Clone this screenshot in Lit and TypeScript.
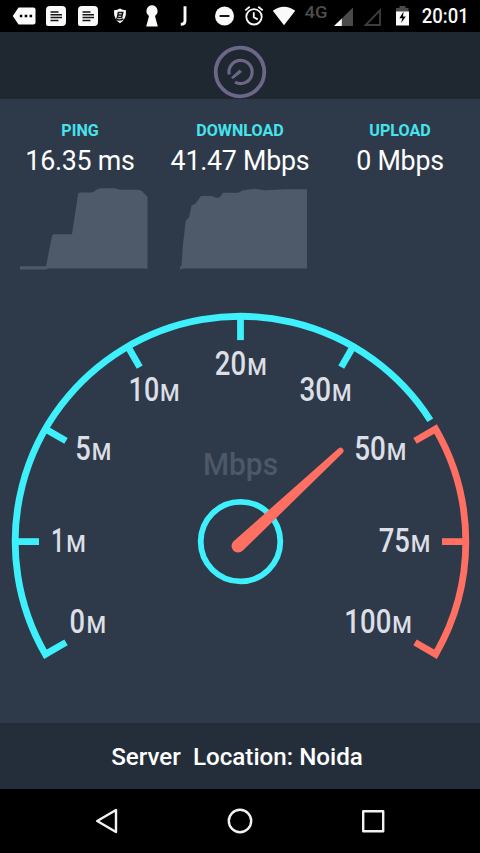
import { LitElement, html, svg, css } from "lit";
import { customElement } from "lit/decorators.js";

const CX = 240.5;
const CY = 541.6;
const R = 225.3;

function polar(deg: number, r: number): [number, number] {
  const a = (deg * Math.PI) / 180;
  return [CX + r * Math.cos(a), CY - r * Math.sin(a)];
}

function arc(from: number, to: number): string {
  const [x1, y1] = polar(from, R);
  const [x2, y2] = polar(to, R);
  const large = Math.abs(from - to) > 180 ? 1 : 0;
  return `M${x1} ${y1}A${R} ${R} 0 ${large} 1 ${x2} ${y2}`;
}

// value, left edge of the digits, digits' advance, left edge of the M, baseline
const marks: [string, number, number, number, number][] = [
  ["0", 69.5, 15.5, 86.6, 632.5],
  ["1", 51, 13.5, 66.2, 551.7],
  ["5", 75.2, 15.5, 91.7, 460.3],
  ["10", 128.6, 30.6, 160.1, 400.7],
  ["20", 214.8, 31.3, 247.2, 374.5],
  ["30", 299.4, 31.6, 332.1, 400.7],
  ["50", 354.2, 31.7, 386.7, 460.3],
  ["75", 378.7, 31.2, 410.8, 551.7],
  ["100", 344.3, 47, 392.2, 632.5],
];

const ticks: [number, boolean][] = [
  [180, false], [150, false], [120, false], [90, false], [60, false], [0, true],
];

@customElement("speed-gauge")
export class SpeedGauge extends LitElement {
  static styles = css`
    :host { display: block; }
    svg { display: block; }
    .line { fill: none; stroke: #3ef0fb; stroke-width: 6.8; stroke-linejoin: miter; }
    .hot { stroke: #ff6f62; }
    .hub { stroke-width: 5.8; }
    .needle { fill: #ff6f62; }
    text { font-family: Roboto, "Liberation Sans", sans-serif; font-weight: 500; fill: #dcdfe6; }
    .num { font-size: 32.3px; }
    .m { font-size: 23.5px; }
    .unit { font-size: 31px; fill: #4c5868; }
  `;

  private tick(deg: number, hot: boolean) {
    const [x1, y1] = polar(deg, R);
    const [x2, y2] = polar(deg, 201.5);
    return svg`<line class="line ${hot ? "hot" : ""}" x1=${x1} y1=${y1} x2=${x2} y2=${y2}></line>`;
  }

  render() {
    const zero = polar(210, 201.5);
    const fifty = polar(30, 201.5);
    const max = polar(-30, 201.5);
    return html`<svg width="480" height="440" viewBox="0 283 480 440">
      <text class="unit" x="203" y="475.3" textLength="75" lengthAdjust="spacingAndGlyphs">Mbps</text>
      <path class="line" d="M${zero[0]} ${zero[1]}L${arc(210, 32.6).slice(1)}"></path>
      <path class="line hot" d="M${fifty[0]} ${fifty[1]}L${arc(30, -30).slice(1)}L${max[0]} ${max[1]}"></path>
      ${ticks.map(([d, h]) => this.tick(d, h))}
      <circle class="line hub" cx=${CX} cy=${CY} r="39.8"></circle>
      <path class="needle" d="M233.6 541.2L338.4 448.6A3 3 0 0 1 342.6 453L242.6 550.8A6.5 6.5 0 0 1 233.6 541.2Z"></path>
      ${marks.map(([n, x, w, mx, y]) => svg`<text y=${y}><tspan class="num" x=${x} textLength=${w} lengthAdjust="spacingAndGlyphs">${n}</tspan><tspan class="m" x=${mx} textLength="19.6" lengthAdjust="spacingAndGlyphs">M</tspan></text>`)}
    </svg>`;
  }
}

@customElement("status-bar")
export class StatusBar extends LitElement {
  static styles = css`
    :host { display: block; height: 32px; background: #000; }
    svg { display: block; }
    text { font-family: Roboto, "Liberation Sans", sans-serif; }
    .w { fill: #fafafa; }
    .ws { fill: none; stroke: #fafafa; stroke-width: 1.8; }
    .k { fill: none; stroke: #151515; stroke-width: 1.5; }
    .j { stroke-width: 2.9; }
    .bar { stroke-width: 2; }
    .dim { fill: #4a4a4a; }
    .net { font-size: 17px; fill: #4d4d4d; font-weight: 500; }
    .clock { font-size: 19.6px; fill: #fafafa; font-weight: 500; }
  `;
  render() {
    return html`<svg width="480" height="32" viewBox="0 0 480 32">
      <path class="w" d="M18.5 7.5H33.5Q35.5 7.5 35.5 9.5V22.5Q35.5 24.5 33.5 24.5H18.5L12.8 16Z"></path>
      <path d="M19.8 14.8h2.5v2.5h-2.5zM24.7 14.8h2.5v2.5h-2.5zM29.6 14.8h2.5v2.5h-2.5z"></path>
      ${[46, 78].map((x) => svg`<g transform="translate(${x} 0)">
        <path class="w" d="M4 6H16Q20 6 20 10V22Q20 26 16 26H2Q0 26 0 24V10Q0 6 4 6Z"></path>
        <path class="k" d="M4.5 12H12.5M4.5 14.8H16M4.5 17.6H16M4.5 20.4H12.5"></path></g>`)}
      <path class="w" d="M120 8.6Q123 10.4 126 10.2Q126.5 19.5 120 23.2Q113.5 19.5 114 10.2Q117 10.4 120 8.6Z"></path>
      <path class="k" d="M118.4 12.4H122.8L121.6 17.6H117.4Z M118 15H122.2M115.8 18.6Q119 21.3 123.5 18.8"></path>
      <path class="w" d="M152 5.3A5.8 5.8 0 0 1 155 15.9L157.8 26.5H146.2L149 15.9A5.8 5.8 0 0 1 152 5.3Z"></path>
      <path class="ws j" d="M185 6.3V20.5Q185 24.3 180.8 24.3"></path>
      <circle class="w" cx="224.5" cy="16" r="9.5"></circle>
      <path class="k bar" d="M219.6 16H229.4"></path>
      <circle class="ws" cx="254" cy="16.8" r="7.7"></circle>
      <path class="ws" d="M253.8 12.3V17.3L257.8 19.4M245.3 10.4L249.7 6.8M262.7 10.4L258.3 6.8"></path>
      <path class="w" d="M272.8 10.8Q284 2.5 295.2 10.8L284 25.2Z"></path>
      <text class="net" x="304.6" y="17.6" textLength="23" lengthAdjust="spacingAndGlyphs">4G</text>
      <path class="dim" d="M353 7.5V26H334Z"></path>
      <path class="w" d="M341.8 18.5V26H334Z"></path>
      <path d="M380 10.3V25H365.5Z" fill="none" stroke="#3e3e3e" stroke-width="1.8"></path>
      <path class="dim" d="M399.5 6H405.5V8H408.5V12H396V8H399.5Z"></path>
      <path class="w" d="M396 11.5H409V25.5H396Z"></path>
      <path d="M403.6 11.5L399.4 18.2H402.2L401.2 23L405.8 16.4H403Z"></path>
      <text class="clock" x="421.8" y="23.3" textLength="47" lengthAdjust="spacingAndGlyphs">20:01</text>
    </svg>`;
  }
}

@customElement("app-root")
export class AppRoot extends LitElement {
  static styles = css`
    :host {
      display: flex; flex-direction: column; width: 480px; height: 853px; overflow: hidden;
      background: #2e3a49; color: #fff; font-family: Roboto, "Liberation Sans", sans-serif;
    }
    svg { display: block; }
    .head { height: 66.5px; background: #1f2730; display: flex; justify-content: center; box-sizing: border-box; padding-top: 13px; flex: none; }
    .logo { fill: none; stroke: #6c6788; }
    .stats { display: grid; grid-template-columns: repeat(3, 160px); height: 184.5px; flex: none; }
    .stat { display: flex; flex-direction: column; align-items: center; padding-top: 22px; }
    .name { font-size: 16.1px; line-height: 20px; font-weight: 700; color: #45e4ee; white-space: nowrap; }
    .value { font-size: 26.8px; letter-spacing: -0.24px; line-height: 32px; margin-top: 4px; white-space: nowrap; }
    .chart { margin-top: 6px; fill: #4e5a69; }
    .server {
      height: 66px; flex: none; background: #242e3a; display: flex; align-items: center; justify-content: center;
      font-size: 24.2px; font-weight: 500; white-space: pre; padding-right: 6px; box-sizing: border-box; padding-top: 2px;
    }
    .nav { height: 64px; flex: none; background: #000; }
    .nav path, .nav circle, .nav rect { fill: none; stroke: #f2f2f2; stroke-width: 2.4; stroke-linejoin: round; }
  `;

  private stat(name: string, value: string, area = "") {
    return html`<div class="stat">
      <div class="name">${name}</div>
      <div class="value">${value}</div>
      ${area ? html`<svg class="chart" width="160" height="90" viewBox="0 183 160 90"><path d=${area}></path></svg>` : ""}
    </div>`;
  }

  render() {
    return html`
      <status-bar></status-bar>
      <div class="head">
        <svg class="logo" width="56" height="54" viewBox="212 45 56 54">
          <circle cx="240" cy="72" r="24.3" stroke-width="3.8"></circle>
          <path stroke-width="3.2" d="M229.2 74.5A11.6 11.6 0 1 1 235 82.2"></path>
          <path d="M239.5 70L241.5 72L233 78.5L231.5 77.5Z" fill="#6c6788" stroke-width="1"></path>
        </svg>
      </div>
      <div class="stats">
        ${this.stat("PING", "16.35 ms", "M20 266.3H46L52 236Q52.6 234.3 54 234.3H72L78 194.5Q78.4 192.8 80 192.6H91Q94 192.3 96 190Q98.5 188 102 188.2H115L120 189.8H138Q142 190.2 144 193.2L147.5 197V268.5H47V269.5H20Z")}
        ${this.stat("DOWNLOAD", "41.47 Mbps", "M20 269.5V266.5L21.5 266L23 244L25.8 220.5L29 217.5L31.5 205.8L35.5 203.6L41 196H52Q56 198.8 60 197L63 192.8H78L83 190.3L95 188.7L104 190.3L112 190L125 189.3H147V268.5H22L21.5 269.5Z")}
        ${this.stat("UPLOAD", "0 Mbps")}
      </div>
      <speed-gauge></speed-gauge>
      <div class="server">Server  Location: Noida</div>
      <div class="nav">
        <svg width="480" height="64" viewBox="0 789 480 64">
          <path d="M116 810V832L97.2 821Z"></path>
          <circle cx="240" cy="821" r="11.2"></circle>
          <rect x="363.2" y="811.2" width="20" height="20"></rect>
        </svg>
      </div>
    `;
  }
}
